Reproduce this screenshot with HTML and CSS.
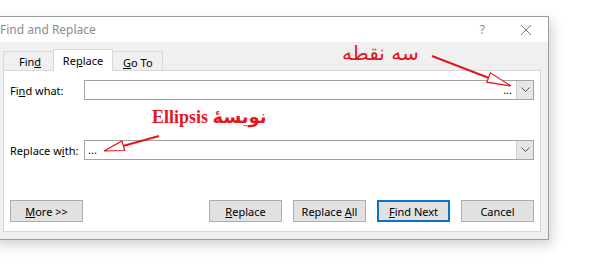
FILE: index.html
```html
<!DOCTYPE html>
<html lang="en">
<head>
    <meta charset="UTF-8">
    <title>Find and Replace</title>
    <link rel="stylesheet" href="styles.css">
</head>
<body>
    <div class="dialog">
        <div class="titlebar">
            <span class="title">Find and Replace</span>
            <span class="help">?</span>
            <svg class="close" width="12" height="12" viewBox="0 0 12 12">
                <path d="M1 1 L11 11 M11 1 L1 11" stroke="#7a7a7a" stroke-width="1" fill="none"/>
            </svg>
        </div>

        <div class="content">
            <div class="tabs">
                <div class="tab">Fin<u>d</u></div>
                <div class="tab active">Re<u>p</u>lace</div>
                <div class="tab small"><u>G</u>o To</div>
            </div>

            <div class="panel">
                <div class="row">
                    <label class="label">Fi<u>n</u>d what:</label>
                    <div class="combo">
                        <span class="value right">...</span>
                        <span class="drop">
                            <svg width="9" height="6" viewBox="0 0 9 6"><path d="M0.5 0.5 L4.5 4.5 L8.5 0.5" stroke="#555" fill="none"/></svg>
                        </span>
                    </div>
                </div>

                <div class="row second">
                    <label class="label">Replace w<u>i</u>th:</label>
                    <div class="combo">
                        <span class="value">...</span>
                        <span class="drop">
                            <svg width="9" height="6" viewBox="0 0 9 6"><path d="M0.5 0.5 L4.5 4.5 L8.5 0.5" stroke="#555" fill="none"/></svg>
                        </span>
                    </div>
                </div>

                <div class="buttons">
                    <button class="btn"><u>M</u>ore &gt;&gt;</button>
                    <div class="spacer"></div>
                    <button class="btn"><u>R</u>eplace</button>
                    <button class="btn">Replace <u>A</u>ll</button>
                    <button class="btn default"><u>F</u>ind Next</button>
                    <button class="btn">Cancel</button>
                </div>
            </div>
        </div>
    </div>

    <!-- anotações por cima do diálogo -->
    <div class="note note-dots" dir="rtl">سه نقطه</div>
    <div class="note note-ellipsis" dir="rtl">نویسهٔ <b class="latin">Ellipsis</b></div>

    <svg class="arrows" width="595" height="264" viewBox="0 0 595 264">
        <path d="M432 56 L489 78" stroke="#e3151e" stroke-width="2" fill="none"/>
        <polygon points="511,86 486.8,82.2 490.4,72.8" fill="#fff" stroke="#e3151e" stroke-width="1.2"/>
        <path d="M159 136 L123 146" stroke="#e3151e" stroke-width="2" fill="none"/>
        <polygon points="104,151 124.6,150.5 122,140.9" fill="#fff" stroke="#e3151e" stroke-width="1.2"/>
    </svg>
</body>
</html>
```

FILE: styles.css
```css
body {
    margin: 0;
    background: #fff;
    font-family: "Noto Sans", "Open Sans", sans-serif;
    font-size: 11px;
    color: #000;
    position: relative;
    width: 595px;
    height: 264px;
    overflow: hidden;
}

.dialog {
    margin: 16px 0 0 -8px;
    width: 557px;
    box-sizing: border-box;
    border: 1px solid #9c9c9c;
    background: #f0f0f0;
    box-shadow: 3px 5px 12px rgba(0,0,0,0.18);
}

.titlebar {
    height: 25px;
    background: #fff;
    display: flex;
    align-items: center;
    padding-left: 7px;
}

.title {
    color: #8c8c8c;
    font-size: 12px;
    flex: 1;
}

.help {
    color: #8c8c8c;
    font-size: 12px;
    margin-right: 35px;
}

.close {
    margin-right: 16px;
}

.content {
    padding: 7px 7px 7px 10px;
}

.tabs {
    display: flex;
    align-items: flex-end;
    height: 21px;
}

.tab {
    height: 19px;
    box-sizing: border-box;
    border: 1px solid #d9d9d9;
    border-bottom: none;
    background: #f0f0f0;
    padding: 1px 15px 0;
    line-height: 17px;
    margin-right: -1px;
}

.tab:first-child {
    width: 51px;
}

.tab.active {
    background: #fff;
    width: 60px;
    padding: 2px 0 0;
    text-align: center;
    position: relative;
    z-index: 1;
    margin-bottom: -1px;
    height: 22px;
}

.tab.small {
    width: 51px;
    padding: 2px 0 0 10px;
}

.panel {
    height: 162px;
    box-sizing: border-box;
    border: 1px solid #d9d9d9;
    background: #fff;
    padding: 9px 6px 0 6px;
}

.row {
    display: flex;
    align-items: center;
    height: 20px;
}

.row.second {
    margin-top: 40px;
}

.label {
    width: 74px;
    flex: none;
}

.combo {
    flex: 1;
    height: 20px;
    box-sizing: border-box;
    border: 1px solid #a3a3a3;
    display: flex;
    align-items: stretch;
}

.value {
    flex: 1;
    padding-left: 3px;
    line-height: 17px;
}

.value.right {
    text-align: right;
    padding-right: 4px;
}

.drop {
    width: 16px;
    background: #e6e6e6;
    border-left: 1px solid #cfcfcf;
    display: flex;
    align-items: center;
    justify-content: center;
}

.buttons {
    display: flex;
    margin-top: 40px;
    gap: 11px;
}

.spacer {
    flex: 1;
}

.btn {
    width: 73px;
    height: 22px;
    box-sizing: border-box;
    background: #e1e1e1;
    border: 1px solid #adadad;
    font-family: inherit;
    font-size: 11px;
    color: #000;
    padding: 0;
}

.btn.default {
    border: 2px solid #0a72c9;
}

.note {
    position: absolute;
    color: #e3151e;
    white-space: nowrap;
}

.note-dots {
    left: 342px;
    top: 41px;
    font-family: "DejaVu Sans", sans-serif;
    font-size: 20px;
}

.note-ellipsis {
    left: 152px;
    top: 106px;
    font-family: "Liberation Serif", "DejaVu Sans", serif;
    font-size: 18px;
    font-weight: bold;
}

.arrows {
    position: absolute;
    left: 0;
    top: 0;
    pointer-events: none;
}
```
